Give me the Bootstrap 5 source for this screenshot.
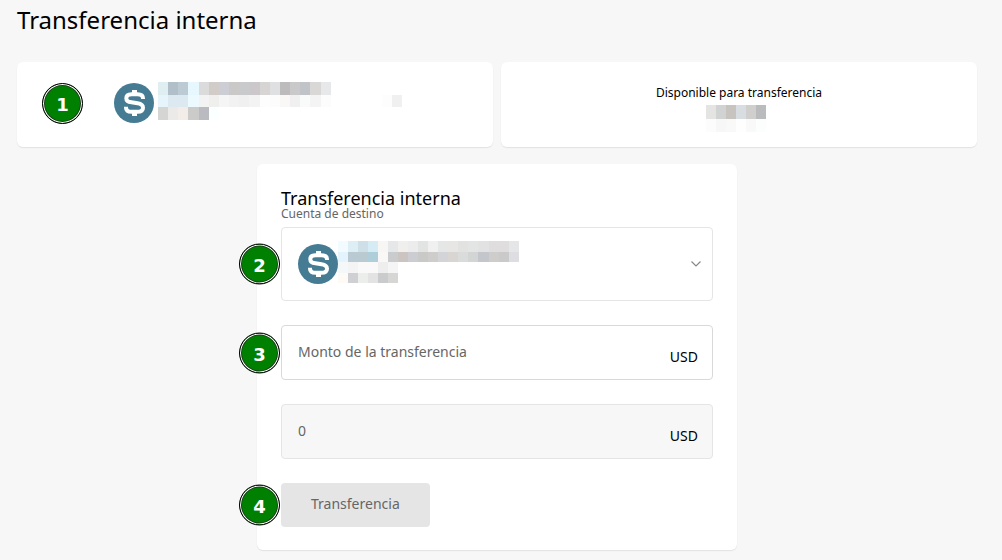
<!DOCTYPE html>
<html lang="es">
<head>
<meta charset="utf-8">
<meta name="viewport" content="width=device-width, initial-scale=1">
<title>Transferencia interna</title>
<link href="https://cdn.jsdelivr.net/npm/bootstrap@5.3.0/dist/css/bootstrap.min.css" rel="stylesheet">
<style>
  body { background: #f7f7f7; color: #000; font: 14px/20px "Noto Sans", "Open Sans", sans-serif; }
  .page { padding: 4px 25px 10px 17px; }
  .page-title { font-size: 24px; line-height: 32px; font-weight: 400; margin: 0 0 26px; }
  .panel { background: #fff; border-radius: 6px; box-shadow: 0 1px 1px #e2e2e2; }
  .summary { min-height: 85px; }
  .account { padding: 0 25px 3px; gap: 31px; }
  .available { padding-top: 6px; }
  .caption { font-size: 12px; line-height: 20px; }
  .form-panel { max-width: 480px; margin-top: 17px; padding: 24px 24px 23px; }
  .form-title { font-size: 18px; line-height: 20px; font-weight: 400; margin: 0; }
  .field-label { display: block; font-size: 12px; line-height: 12px; color: #666; margin-bottom: 7px; }
  .account-select.form-select { height: 74px; border: 1px solid #e5e5e5; border-radius: 4px; background-image: none; }
  .account-value { position: absolute; inset: 0 12px 0 17px; pointer-events: none; }
  .money { height: 55px; border: 1px solid #d9d9d9; border-radius: 4px; padding: 0 14px 0 16px; }
  .money.locked { background: #f7f7f7; border-color: #e5e5e5; }
  .money input { flex: 1; min-width: 0; border: 0; padding: 0 0 2px; background: transparent; color: #666; outline: 0; }
  .money input::placeholder { color: #666; opacity: 1; }
  .money .unit { padding-top: 9px; }
  .send.btn { font-size: 14px; line-height: 20px; padding: 11px 30px 13px; border: 0; border-radius: 4px; background: #e5e5e5; color: #666; opacity: 1; }
  .pin { width: 41px; height: 41px; flex: none; border-radius: 50%; background: #008000; border: 1px solid #000; box-shadow: inset 0 0 0 1px #fff, inset 0 0 0 2px #1c401c;
         color: #fff; font: bold 18px/41px "DejaVu Sans", sans-serif; text-align: center; }
  .pin-side { position: absolute; right: 100%; top: 50%; margin-right: 1px; transform: translateY(-50%); z-index: 2; }
  .coin, .mosaic { display: block; flex: none; }
</style>
</head>
<body>
<svg width="0" height="0" class="position-absolute" aria-hidden="true">
  <symbol id="coin" viewBox="0 0 40 40">
    <circle cx="20" cy="20" r="20" fill="#457b93"/>
    <path d="M20.500 7v5M20.500 28v5" stroke="#fff" stroke-width="5" fill="none"/>
    <path d="M29 16V15.500C29 12.500 26.500 11.200 23.500 11.200H17.500C14.500 11.200 12.300 12.500 12.300 15.200C12.300 18 14.500 19 17.500 19.300L23.500 20.200C27 20.700 29 22 29 24.700C29 27.500 26.800 28.800 23.500 28.800H17.500C14 28.800 12 27.500 12 24.500V23.800" stroke="#fff" stroke-width="4" fill="none"/>
  </symbol>
</svg>

<main class="page">
  <h1 class="page-title">Transferencia interna</h1>

  <div class="row g-2">
    <section class="col-6">
      <div class="panel summary account d-flex align-items-center">
        <span class="pin">1</span>
        <div class="d-flex align-items-center gap-1">
          <svg class="coin" width="40" height="40" aria-hidden="true"><use href="#coin"/></svg>
          <svg class="mosaic" id="source-account" width="244" height="42" role="img" aria-label="Cuenta de origen"></svg>
        </div>
      </div>
    </section>
    <section class="col-6">
      <div class="panel summary available d-flex flex-column align-items-center justify-content-center">
        <span class="caption">Disponible para transferencia</span>
        <svg class="mosaic" id="balance" width="66" height="30" role="img" aria-label="Saldo"></svg>
      </div>
    </section>
  </div>

  <form class="panel form-panel mx-auto d-flex flex-column gap-4">
    <div>
      <h2 class="form-title">Transferencia interna</h2>
      <label class="field-label" for="target">Cuenta de destino</label>
      <div class="position-relative">
        <span class="pin pin-side">2</span>
        <select class="form-select account-select" id="target"><option value="1"></option></select>
        <div class="account-value d-flex align-items-center">
          <svg class="coin" width="40" height="40" aria-hidden="true"><use href="#coin"/></svg>
          <svg class="mosaic" id="target-account" width="181" height="46" aria-hidden="true"></svg>
          <svg class="ms-auto" width="10" height="6" viewBox="0 0 10 6" aria-hidden="true"><path d="M.500 .500L5 5L9.500 .500" fill="none" stroke="#888" stroke-width="1.200"/></svg>
        </div>
      </div>
    </div>

    <div class="position-relative">
      <span class="pin pin-side">3</span>
      <div class="money d-flex align-items-center">
        <input type="text" id="amount" placeholder="Monto de la transferencia" aria-label="Monto de la transferencia">
        <label class="unit" for="amount">USD</label>
      </div>
    </div>

    <div class="money locked d-flex align-items-center">
      <input type="text" id="result" value="0" readonly aria-label="Importe recibido">
      <label class="unit" for="result">USD</label>
    </div>

    <div class="position-relative align-self-start">
      <span class="pin pin-side">4</span>
      <button type="submit" class="btn send d-block" disabled>Transferencia</button>
    </div>
  </form>
</main>

<script src="https://cdn.jsdelivr.net/npm/bootstrap@5.3.0/dist/js/bootstrap.bundle.min.js"></script>
<script>
  // Each row: [x, y, height, colours, indexes of the cells that are one pixel wider]
  function mosaic(id, rows) {
    const svg = document.getElementById(id);
    for (const [left, y, h, colours, wide] of rows) {
      let x = left;
      colours.split(' ').forEach((c, i) => {
        const w = wide.includes(i) ? 11 : 10;
        const r = document.createElementNS('http://www.w3.org/2000/svg', 'rect');
        for (const [k, v] of Object.entries({ x, y, width: w, height: h, fill: '#' + c })) r.setAttribute(k, v);
        svg.appendChild(r);
        x += w;
      });
    }
  }
  const wide = [3, 9, 15];
  mosaic('source-account', [
    [0, 0, 13, 'dfeef1 b1bfc8 bccad4 e6f7fd dbdbdb d1ccc7 cccdd5 cbc9c8 c9cacc cbc7ca d6d5d4 dee0e2 bdbbbc c9c9ca c0c4c8 dad8d6 e6e8ea', wide],
    [0, 13, 12, 'e6f5fc dce9f1 dce9f1 ecf9ff f3f3f3 efefed f5f5f6 f2f2f2 f0f0f0 f3f3f4 fdfdfd fcfcfc f9f8f7 f0f0f0 f9fbfa f4f4f4 fcfcfc', wide],
    [224, 13, 12, 'fdfdfd f0f0f0', []],
    [0, 25, 13, 'd5d5d4 ebeae9 f2ede8 cbcbca babbc0 fcffff', [3]]
  ]);
  mosaic('target-account', [
    [0, 0, 11, 'f2fbff ddeef5 cedfe7 d6ecf5 f8f6f4 e5e7e8 f1efee ececec e2e4e3 f0f0f0 e5e7e6 e8e6e4 e2e2e0 e3e5e4 e2e2e2 dfdddd dfdddd e5e6e8', [14]],
    [0, 11, 10, 'e4f4fc bacad2 b9cad1 aeceda faf8f6 cacbcd cbc4c0 cccdd2 c9c9c8 cfcdcb d2d4d7 d8d5d2 dadcdb d3d5d4 c3c7cb cfcdcb cacaca dddde2', [14]],
    [0, 21, 11, 'f4f8f9 f4f4f4 f9f9f9 f9f9f9 eeeeee f5f5f5', []],
    [0, 32, 10, 'fefaf5 cfcfd4 eceeec e2e3e2 cacbcd d6d6d5', []]
  ]);
  mosaic('balance', [
    [0, 2, 14, 'e4e4e3 d1d3d2 c7c3bf d8dde2 d1cfcd babbbd', []],
    [0, 16, 13, 'fcfcfc f7f7f7 f9f9fa fefefe f9f9f9 fcfefe', []]
  ]);
</script>
</body>
</html>
